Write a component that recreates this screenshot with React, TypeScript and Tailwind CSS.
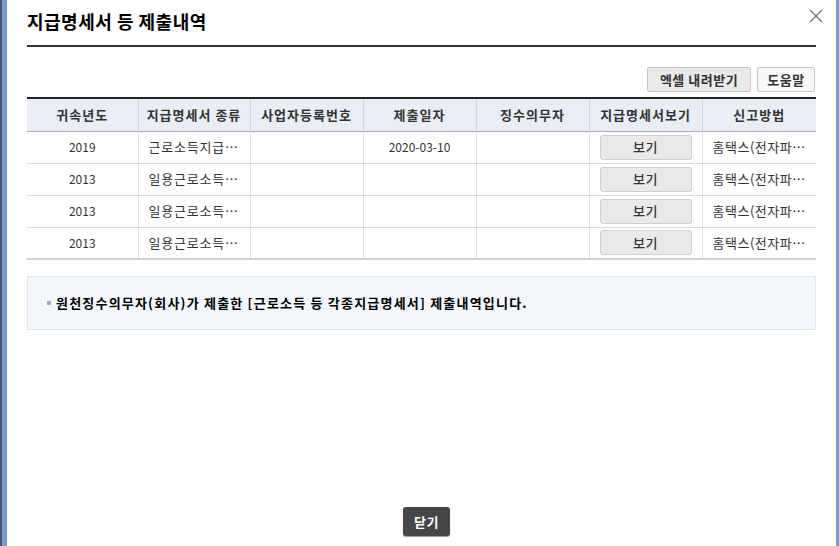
import React from 'react';

const rows = [
  { year: '2019', kind: '근로소득지급…', date: '2020-03-10', method: '홈택스(전자파…' },
  { year: '2013', kind: '일용근로소득…', date: '', method: '홈택스(전자파…' },
  { year: '2013', kind: '일용근로소득…', date: '', method: '홈택스(전자파…' },
  { year: '2013', kind: '일용근로소득…', date: '', method: '홈택스(전자파…' },
];

const headers = ['귀속년도', '지급명세서 종류', '사업자등록번호', '제출일자', '징수의무자', '지급명세서보기', '신고방법'];
const widths = ['w-[111px]', 'w-[112px]', 'w-[113px]', 'w-[113px]', 'w-[113px]', 'w-[113px]', 'w-[114px]'];

export default function App() {
  return (
    <div
      className="flex h-[546px] w-[839px] overflow-hidden bg-white text-[#333]"
      style={{ fontFamily: '"Noto Sans CJK KR", "Noto Sans", sans-serif' }}
    >
      {/* left frame */}
      <div className="flex w-[7px] shrink-0">
        <div className="w-[2px] bg-[#4b5563]" />
        <div className="flex-1 bg-[#7b9dcd]" />
      </div>

      <div className="relative flex flex-1 flex-col px-[20px]">
        {/* title */}
        <div className="flex h-[47px] items-start border-b-2 border-[#333] pt-[9px]">
          <h1 className="text-[18px] font-bold leading-[24px] tracking-[0.5px] text-black">지급명세서 등 제출내역</h1>
        </div>
        <button className="absolute right-[13px] top-[9px] h-[14px] w-[14px]">
          <svg viewBox="0 0 14 14" className="h-[14px] w-[14px]">
            <path d="M1 1 L13 13 M13 1 L1 13" stroke="#5b6479" strokeWidth="1.1" />
          </svg>
        </button>

        {/* toolbar */}
        <div className="mt-[20px] flex justify-end gap-[6px] pr-px">
          <button className="h-[25px] w-[104px] rounded-[2px] border border-[#c6c6c6] bg-[#e9e9e9] text-[13px] font-bold leading-[23px] tracking-[0.5px] text-[#333]">
            엑셀 내려받기
          </button>
          <button className="h-[25px] w-[58px] rounded-[2px] border border-[#c6c6c6] bg-[#f7f7f7] text-[13px] font-bold leading-[23px] tracking-[0.5px] text-[#333]">
            도움말
          </button>
        </div>

        {/* table */}
        <table className="mt-[5px] w-[789px] table-fixed border-collapse text-[13px]">
          <thead>
            <tr className="h-[33px] border-t-2 border-b border-t-[#222] border-b-[#a6abb3] bg-[#e8edf6]">
              {headers.map((h, i) => (
                <th
                  key={h}
                  className={`${widths[i]} border-l border-[#cfd6e0] text-[13px] font-bold tracking-[1px] text-[#333] first:border-l-0`}
                >
                  {h}
                </th>
              ))}
            </tr>
          </thead>
          <tbody>
            {rows.map((r, i) => (
              <tr key={i} className="h-[32px] border-b border-[#d3dbe6] last:border-b-2 last:border-[#c9d3e0]">
                <td className="text-center text-[12px]">{r.year}</td>
                <td className="border-l border-[#dde2e8] pl-[10px] tracking-[0.8px]">{r.kind}</td>
                <td className="border-l border-[#dde2e8]" />
                <td className="border-l border-[#dde2e8] text-center text-[12px]">{r.date}</td>
                <td className="border-l border-[#dde2e8]" />
                <td className="border-l border-[#dde2e8] text-center">
                  <button className="h-[25px] w-[92px] rounded-[3px] border border-[#cfcfcf] bg-[#e9e9e9] text-[13px] font-medium tracking-[0.5px] text-[#333]">
                    보기
                  </button>
                </td>
                <td className="border-l border-[#dde2e8] pl-[10px] tracking-[0.5px]">{r.method}</td>
              </tr>
            ))}
          </tbody>
        </table>

        {/* notice */}
        <div className="mt-[16px] flex h-[54px] w-[789px] items-center border border-[#dde5ef] bg-[#f3f6fa] pl-[19px]">
          <span className="mr-[5px] h-[4px] w-[4px] bg-[#a9a9a9]" />
          <span className="text-[13px] font-bold tracking-[1.2px] text-black">
            원천징수의무자(회사)가 제출한 [근로소득 등 각종지급명세서] 제출내역입니다.
          </span>
        </div>

        {/* footer */}
        <div className="mt-auto mb-[10px] flex justify-center pl-[10px]">
          <button className="h-[29px] w-[47px] rounded-[3px] bg-[#464646] text-[13px] font-bold tracking-[0.5px] text-white shadow-[0_1px_1px_rgba(0,0,0,0.4)]">
            닫기
          </button>
        </div>
      </div>

      {/* right frame */}
      <div className="w-[3px] shrink-0 bg-[#7b9dcd]" />
    </div>
  );
}
